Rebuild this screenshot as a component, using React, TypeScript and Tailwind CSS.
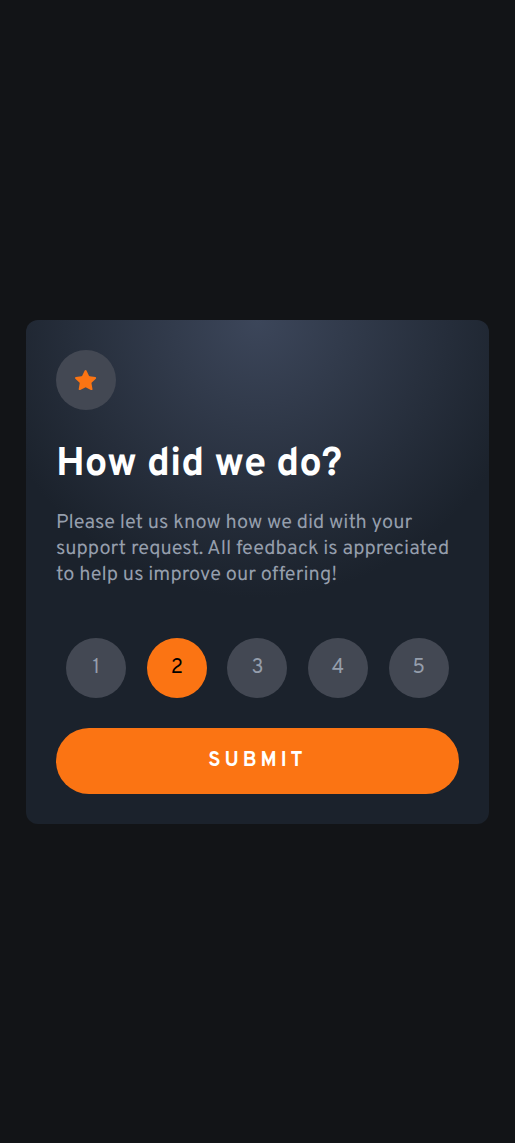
import { useState } from "react";

const ratings = [1, 2, 3, 4, 5];

function StarIcon() {
  return (
    <svg width="21.5" height="20.2" viewBox="0 0 17 16" aria-hidden="true">
      <path
        fill="#fb7413"
        d="m9.067.43 1.99 4.031c.112.228.33.386.58.422l4.45.647a.772.772 0 0 1 .427 1.316l-3.22 3.138a.773.773 0 0 0-.222.683l.76 4.431a.772.772 0 0 1-1.12.813l-3.98-2.092a.773.773 0 0 0-.718 0l-3.98 2.092a.772.772 0 0 1-1.119-.813l.76-4.431a.77.77 0 0 0-.222-.683L.233 6.846A.772.772 0 0 1 .661 5.53l4.449-.647a.772.772 0 0 0 .58-.422L7.68.43a.774.774 0 0 1 1.387 0Z"
      />
    </svg>
  );
}

export default function App() {
  const [selected, setSelected] = useState(2);

  return (
    <main className="flex h-[1143px] items-center justify-center bg-[#121417] px-[26px] pt-px font-['Overpass','Roboto',sans-serif] antialiased [text-rendering:geometricPrecision]">
      <section className="flex h-[504px] w-[463px] flex-col rounded-xl bg-[#1b222c] bg-[radial-gradient(circle_at_top,#3c465a,#1b222c_50%)] p-[30px]">
        <div className="flex size-[60px] shrink-0 items-center justify-center rounded-full bg-[#434853]">
          <StarIcon />
        </div>
        <h1 className="mt-[30px] h-[52px] text-[40px] leading-[52px] font-bold tracking-[-0.03px] text-white">
          How did we do?
        </h1>
        <p className="mt-[18px] text-[20px] leading-[26px] tracking-[0.01px] text-[#959eac]">
          Please let us know how we did with your support request. All feedback is appreciated to
          help us improve our offering!
        </p>
        <div className="mt-[50px] flex justify-around">
          {ratings.map((n) => (
            <button
              key={n}
              type="button"
              onClick={() => setSelected(n)}
              className={
                n === selected
                  ? "size-[60px] rounded-full bg-[#fb7413] text-[20px] text-black"
                  : "size-[60px] rounded-full bg-[#434853] text-[20px] text-[#959eac]"
              }
            >
              {n}
            </button>
          ))}
        </div>
        <button
          type="button"
          className="mt-[30px] h-[66px] shrink-0 rounded-full bg-[#fb7413] text-[20px] font-bold tracking-[4px] text-white"
        >
          SUBMIT
        </button>
      </section>
    </main>
  );
}
